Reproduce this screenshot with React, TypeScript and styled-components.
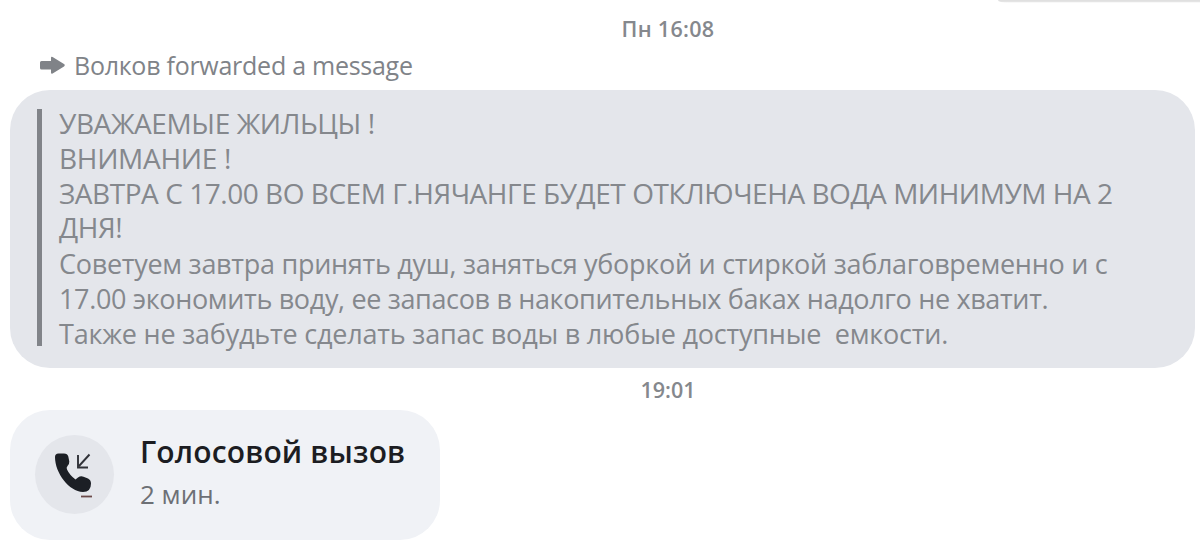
import React from "react";
import styled, { createGlobalStyle } from "styled-components";

const GlobalStyle = createGlobalStyle`
  * { box-sizing: border-box; }
  body {
    margin: 0;
    background: #fff;
    font-family: "Open Sans", "Noto Sans", sans-serif;
    overflow: hidden;
  }
`;

const Thread = styled.main`
  display: flex;
  flex-direction: column;
  width: 1200px;
  height: 549px;
  padding: 0 5px 0 10px;
  overflow: hidden;
`;

const PreviousBubbleEdge = styled.div`
  align-self: flex-end;
  width: 202px;
  height: 3px;
  margin-right: -5px;
  background: linear-gradient(#e0e0e0 0 1px, #e4e4e4 1px 2px, #f8f8f8 2px);
  border-bottom-left-radius: 10px 3px;
`;

const Timestamp = styled.time<{ $top: number; $spacing?: number }>`
  height: 42px;
  padding-top: ${(p) => p.$top}px;
  padding-left: 131px;
  color: #85888d;
  font-size: 21.5px;
  font-weight: 600;
  line-height: 32px;
  text-align: center;
  letter-spacing: ${(p) => p.$spacing ?? 0}px;
`;

const ForwardedLabel = styled.div`
  display: flex;
  align-items: center;
  gap: 9px;
  height: 40px;
  padding-left: 29px;
  color: #808388;
  font-size: 25px;
  line-height: 40px;
  letter-spacing: -0.26px;
  white-space: nowrap;
`;

const Bubble = styled.section`
  height: 278px;
  margin-top: 5px;
  padding: 19px 27px;
  border-radius: 40px;
  background: #e4e6eb;
`;

const Quote = styled.blockquote`
  display: flex;
  height: 237px;
  margin: 0;
  border-left: 5px solid #818489;
  color: #85888d;
`;

const QuoteText = styled.div`
  display: flex;
  flex-direction: column;
  margin-top: -3px;
  padding-left: 17px;
`;

const QuoteLine = styled.span<{ $caps?: boolean; $spacing: number }>`
  flex: none;
  width: max-content;
  height: 34.8px;
  font-size: ${(p) => (p.$caps ? 28 : 27)}px;
  line-height: ${(p) => (p.$caps ? 34.8 : 37.6)}px;
  white-space: pre;
  letter-spacing: ${(p) => p.$spacing}px;
`;

const CallCard = styled.section`
  display: flex;
  align-items: flex-start;
  gap: 26px;
  width: 430px;
  height: 130px;
  padding: 25px 0 0 25px;
  border-radius: 40px;
  background: #f0f2f6;
`;

const CallBadge = styled.div`
  display: flex;
  flex: none;
  width: 79px;
  height: 79px;
  border-radius: 50%;
  background: #e4e6eb;
`;

const CallText = styled.div`
  display: flex;
  flex-direction: column;
  margin-top: -5px;
  white-space: nowrap;
`;

const CallTitle = styled.strong`
  color: #1c1d22;
  font-size: 30px;
  font-weight: 600;
  line-height: 44px;
  letter-spacing: 0.15px;
`;

const CallDuration = styled.span`
  color: #6d7075;
  font-size: 26px;
  line-height: 40px;
`;

const lines: { text: string; caps?: boolean; spacing: number }[] = [
  { text: "УВАЖАЕМЫЕ ЖИЛЬЦЫ !", caps: true, spacing: -0.4 },
  { text: "ВНИМАНИЕ !", caps: true, spacing: -0.3 },
  { text: "ЗАВТРА С 17.00 ВО ВСЕМ Г.НЯЧАНГЕ БУДЕТ ОТКЛЮЧЕНА ВОДА МИНИМУМ НА 2", caps: true, spacing: -0.46 },
  { text: "ДНЯ!", caps: true, spacing: -0.4 },
  { text: "Советуем завтра принять душ, заняться уборкой и стиркой заблаговременно и с", spacing: -0.28 },
  { text: "17.00 экономить воду, ее запасов в накопительных баках надолго не хватит.", spacing: -0.35 },
  { text: "Также не забудьте сделать запас воды в любые доступные  емкости.", spacing: -0.21 },
];

const ForwardIcon = () => (
  <svg width="26" height="20" viewBox="0 0 26 20" fill="#808388">
    <path d="M2.500 6H12V2.900Q12 1.100 13.600 2.100L25 9Q26.500 10.200 25 11.400L13.600 18.400Q12 19.400 12 17.600V14.500H2.500Q1 14.500 1 13V7.500Q1 6 2.500 6Z" />
  </svg>
);

const IncomingCallIcon = () => (
  <svg width="79" height="79" viewBox="0 0 79 79" fill="none">
    <path
      d="M20 22Q20 18.500 23.500 18.500H29Q32.500 18.500 33.300 21.500L34.300 26.500Q34.500 29 32.500 31Q31 32.500 32 34.500Q34.500 40 40.500 44.500L43 42.500Q45.500 40.700 48.500 41.700L53 43.500Q56 45 56 48.500Q56 57 48 57C34 56.500 20 38 20 22Z"
      fill="#1c1f25"
    />
    <path d="M54.500 19.500L44 31M43 20V32.500H53" stroke="#303238" strokeWidth="1.900" />
    <path d="M46 61.500H57" stroke="#6b4a4a" strokeWidth="1.800" />
  </svg>
);

export default function App() {
  return (
    <>
      <GlobalStyle />
      <Thread>
        <PreviousBubbleEdge />
        <Timestamp $top={10} $spacing={0.3}>Пн 16:08</Timestamp>
        <ForwardedLabel>
          <ForwardIcon />
          <span>Волков forwarded a message</span>
        </ForwardedLabel>
        <Bubble>
          <Quote>
            <QuoteText>
              {lines.map((line) => (
                <QuoteLine key={line.text} $caps={line.caps} $spacing={line.spacing}>
                  {line.text}
                </QuoteLine>
              ))}
            </QuoteText>
          </Quote>
        </Bubble>
        <Timestamp $top={6}>19:01</Timestamp>
        <CallCard>
          <CallBadge>
            <IncomingCallIcon />
          </CallBadge>
          <CallText>
            <CallTitle>Голосовой вызов</CallTitle>
            <CallDuration>2 мин.</CallDuration>
          </CallText>
        </CallCard>
      </Thread>
    </>
  );
}
